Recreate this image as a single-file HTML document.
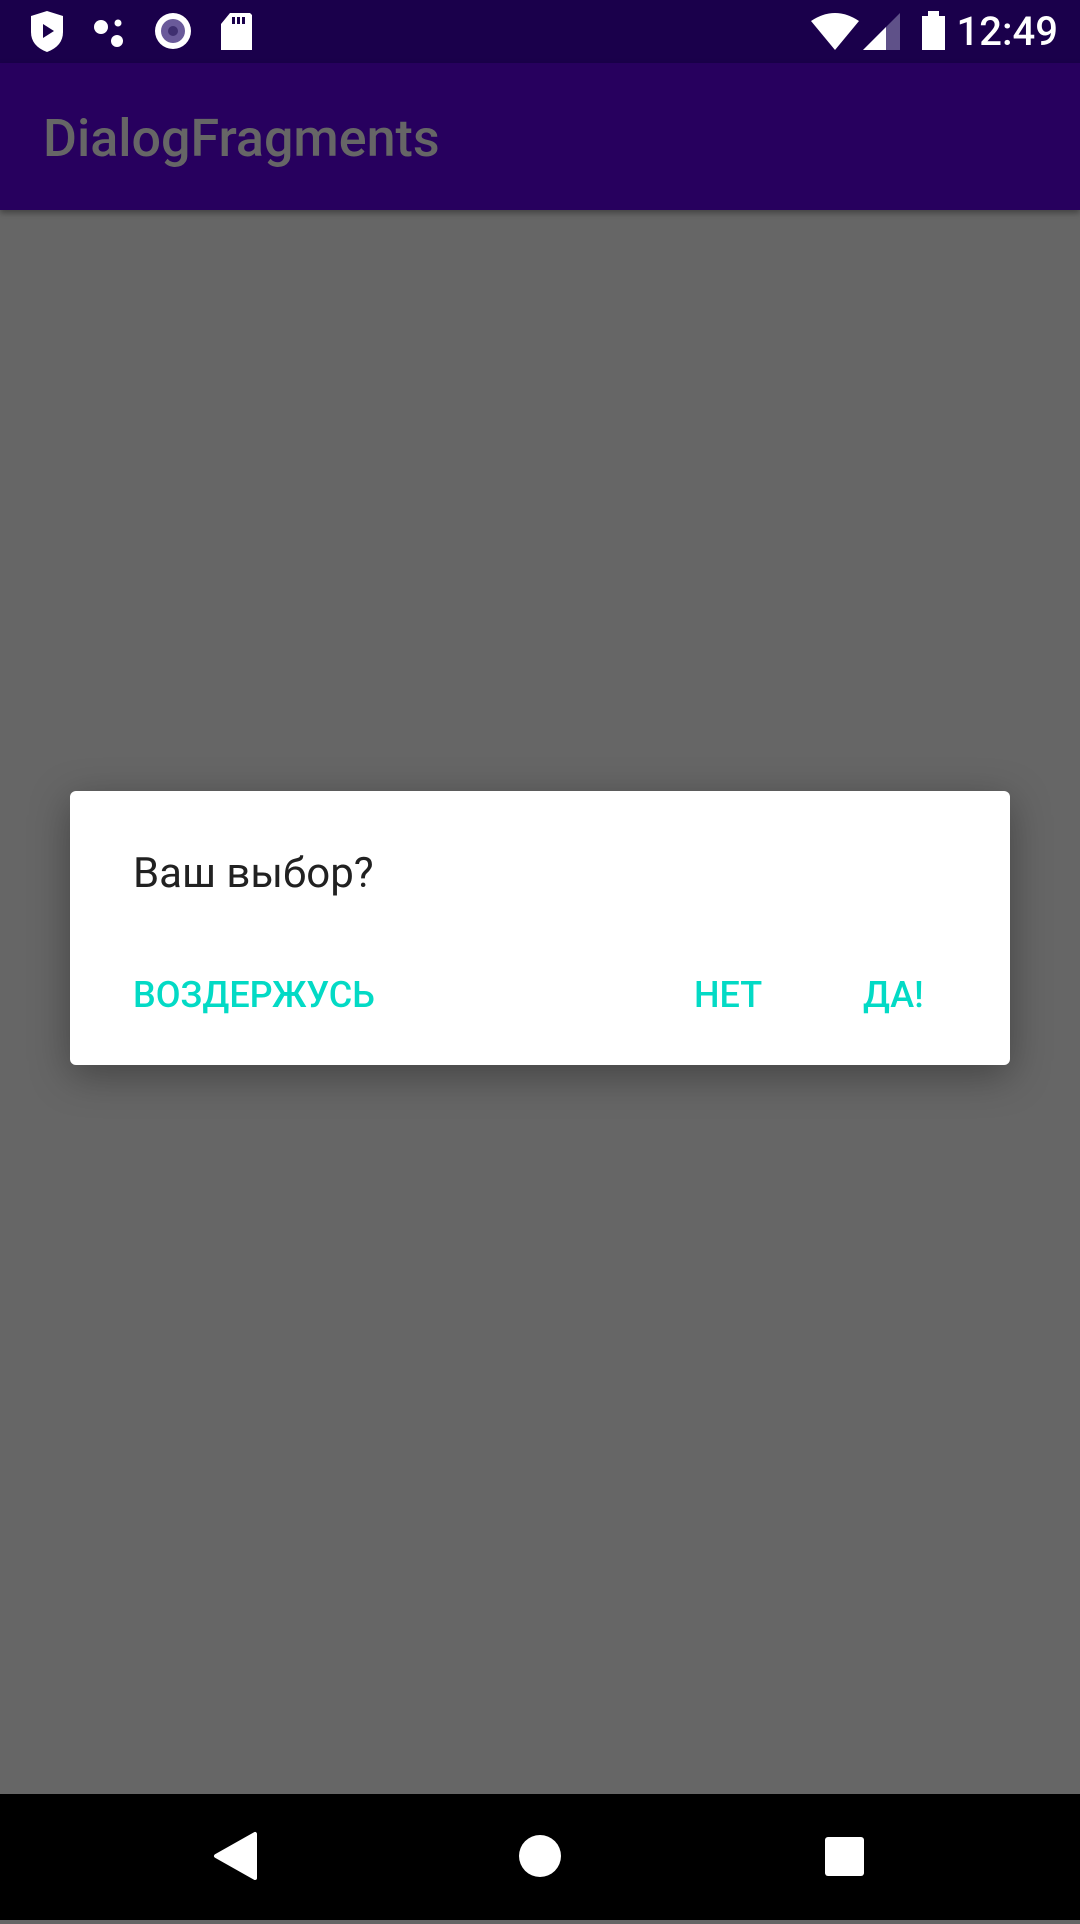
<!DOCTYPE html>
<html><head><meta charset="utf-8"><style>
body{margin:0;width:1080px;height:1920px;background:#666;position:relative;overflow:hidden;font-family:"Roboto","Liberation Sans",sans-serif}
.sb{position:absolute;left:0;top:0;width:1080px;height:63px;background:#1a004b}
.tb{position:absolute;left:0;top:63px;width:1080px;height:147px;background:#27005e;box-shadow:0 3px 6px rgba(0,0,0,.35)}
.tt{position:absolute;left:43px;top:104px;font-size:52px;font-weight:500;color:#666;line-height:70px}
.dlg{position:absolute;left:70px;top:791px;width:940px;height:274px;background:#fff;border-radius:6px;box-shadow:0 10px 40px rgba(0,0,0,.35)}
.msg{position:absolute;left:63px;top:58px;font-size:42px;color:#212121;line-height:50px}
.btn{position:absolute;top:184px;font-size:36px;font-weight:500;color:#03dac5;line-height:40px}
.nav{position:absolute;left:0;top:1794px;width:1080px;height:126px;background:#000}
.time{position:absolute;right:22px;top:8px;color:#fff;font-size:40px;font-weight:500;line-height:48px}
</style></head><body>
<div class="sb">
<svg width="1080" height="63" style="position:absolute;left:0;top:0">
<path d="M31 16 L47 11 L63 16 L63 32 Q63 46 47 52 Q31 46 31 32 Z" fill="#fff"/>
<path d="M43 24 L54 31 L43 38 Z" fill="#1a004b"/>
<circle cx="101" cy="27" r="7" fill="#fff"/><circle cx="118" cy="23" r="3.5" fill="#fff"/><circle cx="117" cy="41" r="6" fill="#fff"/>
<circle cx="173" cy="31" r="18" fill="#fff"/><circle cx="173" cy="31" r="12" fill="#6a5a9a"/><circle cx="173" cy="31" r="5" fill="#3f2f70"/>
<path d="M230 13 L250 13 L252 15 L252 50 L221 50 L221 24 Z" fill="#fff"/>
<rect x="232" y="17" width="3" height="7" fill="#1a004b"/><rect x="237" y="17" width="3" height="7" fill="#1a004b"/><rect x="242" y="17" width="3" height="7" fill="#1a004b"/>
<path d="M811 21 Q835 5 859 21 L835 50 Z" fill="#fff"/>
<path d="M863 50 L900 13 L900 50 Z" fill="#5f5189"/><path d="M863 50 L886 27 L886 50 Z" fill="#fff"/>
<rect x="922" y="16" width="23" height="34" fill="#fff"/><rect x="928" y="11" width="11" height="6" fill="#fff"/>
</svg>
<div class="time">12:49</div>
</div>
<div class="tb"></div>
<div class="tt">DialogFragments</div>
<div class="dlg">
<div class="msg">Ваш выбор?</div>
<div class="btn" style="left:63px">ВОЗДЕРЖУСЬ</div>
<div class="btn" style="left:624px">НЕТ</div>
<div class="btn" style="left:793px">ДА!</div>
</div>
<div class="nav">
<svg width="1080" height="126">
<path d="M216 62 L255 40 L255 84 Z" fill="#fff" stroke="#fff" stroke-width="4" stroke-linejoin="round"/>
<circle cx="540" cy="62" r="21" fill="#fff"/>
<rect x="825" y="43" width="39" height="39" rx="3" fill="#fff"/>
</svg>
</div>
</body></html>
